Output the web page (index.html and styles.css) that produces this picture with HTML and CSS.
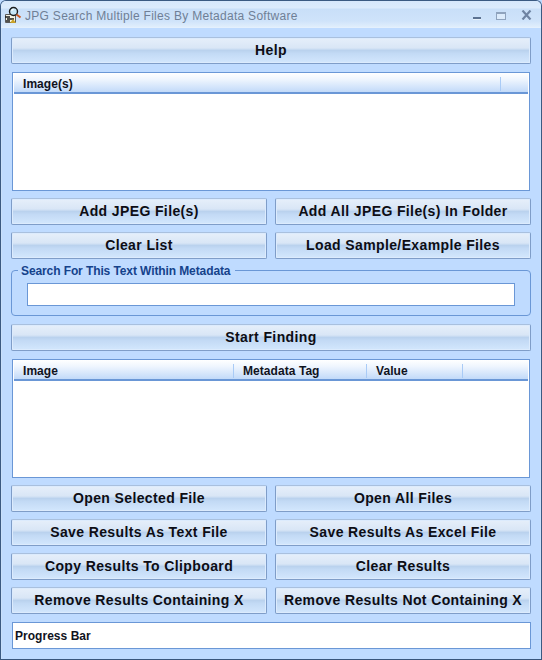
FILE: index.html
```html
<!DOCTYPE html>
<html lang="en">
<head>
<meta charset="utf-8">
<title>JPG Search Multiple Files By Metadata Software</title>
<link rel="stylesheet" href="styles.css">
</head>
<body>
<div class="window">
  <header class="titlebar">
    <svg class="app-icon" width="18" height="18" viewBox="0 0 18 18">
      <path d="M1.5 8.5h10v8h-10z" fill="#f7f3e2" stroke="#5a5a5a" stroke-width="1"/>
      <path d="M1 11h5M3 13h7M2 15h4" stroke="#1c1c1c" stroke-width="1.3"/>
      <path d="M6 17l3-4 3 4z" fill="#c9a227"/>
      <circle cx="9.5" cy="5.5" r="4" fill="#c7e6f7" stroke="#1c1c1c" stroke-width="1.4"/>
      <path d="M7.5 4.5l2-1.5" stroke="#fff" stroke-width="1.2"/>
      <path d="M12.5 8.5l4 3" stroke="#c9541c" stroke-width="2"/>
    </svg>
    <span class="title">JPG Search Multiple Files By Metadata Software</span>
    <div class="controls">
      <span class="ctl-min"></span>
      <span class="ctl-max"></span>
      <svg class="ctl-close" width="11" height="10" viewBox="0 0 11 10"><path d="M1.5 .5l8 9M9.5 .5l-8 9" stroke="#6f84a3" stroke-width="2.2" fill="none"/></svg>
    </div>
  </header>
  <main class="client">
    <button class="btn help">Help</button>
    <section class="list list-top">
      <div class="list-head">
        <span class="col col-images">Image(s)</span>
        <span class="col col-rest"></span>
      </div>
    </section>
    <div class="grid grid-top">
      <button class="btn">Add JPEG File(s)</button>
      <button class="btn">Add All JPEG File(s) In Folder</button>
      <button class="btn">Clear List</button>
      <button class="btn">Load Sample/Example Files</button>
    </div>
    <fieldset class="group">
      <legend>Search For This Text Within Metadata</legend>
      <input class="search" type="text" aria-label="Search text">
    </fieldset>
    <button class="btn start">Start Finding</button>
    <section class="list list-bottom">
      <div class="list-head">
        <span class="col col-image">Image</span>
        <span class="col col-tag">Metadata Tag</span>
        <span class="col col-value">Value</span>
        <span class="col col-rest"></span>
      </div>
    </section>
    <div class="grid grid-bottom">
      <button class="btn">Open Selected File</button>
      <button class="btn">Open All Files</button>
      <button class="btn">Save Results As Text File</button>
      <button class="btn">Save Results As Excel File</button>
      <button class="btn">Copy Results To Clipboard</button>
      <button class="btn">Clear Results</button>
      <button class="btn">Remove Results Containing X</button>
      <button class="btn">Remove Results Not Containing X</button>
    </div>
    <div class="progress">Progress Bar</div>
  </main>
</div>
</body>
</html>
```
FILE: styles.css
```css
* { box-sizing: border-box; }
html, body { margin: 0; padding: 0; }
body { width: 542px; height: 660px; overflow: hidden; font-family: "Liberation Sans", Arial, sans-serif; background: #bfdbff; }
.window { width: 542px; height: 660px; display: flex; flex-direction: column; background: #bfdbff; border: 1px solid #3b5a82; border-bottom-color: #39567c; border-radius: 6px 6px 0 0; box-shadow: inset 1px 0 0 #c9e0fb, inset -1px 0 0 #c9e0fb; }
.titlebar { height: 27px; flex: none; display: flex; align-items: center; padding: 0 9px 0 3px; background: linear-gradient(#d7e8fb 0, #dcebfc 7px, #c9dff8 8px, #cfe3fa 20px, #e0eefc 26px); border-bottom: 1px solid #e4f0fd; border-radius: 5px 5px 0 0; }
.app-icon { flex: none; width: 18px; height: 18px; margin-right: 3px; margin-top: 1px; }
.title { font-size: 12px; letter-spacing: 0.29px; color: #6f7f96; flex: 1; white-space: nowrap; margin-top: 3px; }
.controls { display: flex; align-items: center; margin-top: 1px; }
.ctl-min { width: 8px; height: 3px; background: #5d7392; border-bottom: 1px solid #e8f2fc; margin-right: 15px; margin-top: 7px; }
.ctl-max { width: 10px; height: 8px; border: 1px solid #8fa3bd; border-top-width: 2px; margin-right: 15px; margin-top: 2px; background: #dcebfb; }
.ctl-close { margin-top: 1px; }
.client { flex: 1; display: flex; flex-direction: column; padding: 9px 9px 0 10px; min-height: 0; }
.btn { display: block; width: 100%; height: 27px; padding: 0 0 1px; border: 1px solid #7f9dc8; border-top-color: #a9c0de; border-radius: 2px; font-family: "Liberation Sans", Arial, sans-serif; font-size: 14px; font-weight: bold; letter-spacing: 0.38px; color: #0d0d14; white-space: nowrap; background: linear-gradient(#e6effa 0, #d9e6f6 40%, #bad2ee 50%, #c3daf5 62%, #d3e7fd 100%); box-shadow: inset 0 0 0 1px #dcebfd; }
.list { flex: none; width: 518px; margin-left: 1px; border: 1px solid #6a97d6; background: #fff; padding: 0 1px; }
.list-top { height: 119px; margin-top: 8px; }
.list-bottom { height: 119px; margin-top: 8px; }
.list-head { display: flex; height: 21px; padding: 4px 0 1px; background: linear-gradient(#fff 0, #eef5fe 35%, #c2daf9 100%); border-bottom: 2px solid #6a97d6; }
.col { font-size: 12px; font-weight: bold; line-height: 15px; color: #10131d; padding-left: 9px; border-right: 1px solid #a9cbf6; white-space: nowrap; letter-spacing: 0.06px; }
.col-images { width: 487px; }
.col-rest { flex: 1; border-right: 0; }
.col-image { width: 220px; }
.col-tag { width: 133px; }
.col-value { width: 96px; }
.grid { display: grid; grid-template-columns: 256px 256px; column-gap: 8px; row-gap: 7px; }
.grid-top { margin-top: 7px; }
.grid-bottom { margin-top: 7px; }
.group { flex: none; width: 520px; height: 53px; margin: 4px 0 0; padding: 0 15px; border: 1px solid #6a97d6; border-radius: 4px; }
.group legend { font-size: 12px; font-weight: bold; color: #15428b; padding: 2px 5px 0 3px; margin-left: -9px; line-height: 13px; letter-spacing: -0.1px; white-space: nowrap; }
.search { display: block; width: 488px; height: 23px; margin-top: 5px; border: 1px solid #6a97d6; background: #fff; padding: 0; }
.start { margin-top: 8px; width: 520px; }
.help { width: 520px; }
.grid-top .btn, .grid-bottom .btn { width: 256px; }
.progress { flex: none; width: 519px; height: 27px; margin: 8px 0 0 1px; padding: 1px 0 0 2px; border: 1px solid #6a97d6; background: #fff; font-size: 12px; font-weight: bold; line-height: 25px; letter-spacing: 0.03px; color: #10131d; }
```
